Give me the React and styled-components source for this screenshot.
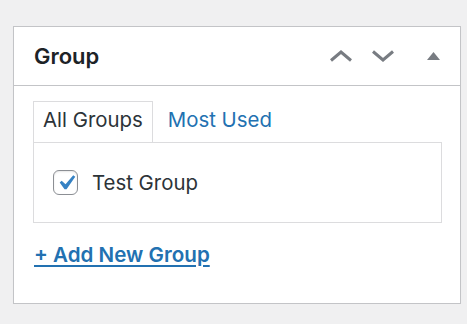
import styled, { createGlobalStyle } from "styled-components";

const Global = createGlobalStyle`
  body {
    margin: 0;
    background: #f0f0f1;
    font-family: Inter, "Liberation Sans", Arial, sans-serif;
  }
`;

const Page = styled.div`
  padding: 26px 0 0 13px;
`;

const Box = styled.div`
  width: 446px;
  height: 276px;
  background: #fff;
  border: 1px solid #c3c4c7;
  box-shadow: 0 1px 1px rgba(0, 0, 0, 0.04);
  display: flex;
  flex-direction: column;
`;

const Header = styled.div`
  height: 58px;
  border-bottom: 1px solid #c3c4c7;
  display: flex;
  align-items: center;
  padding-left: 20px;
`;

const Title = styled.h2`
  margin: 0;
  flex: 1;
  font-size: 22px;
  font-weight: 600;
  color: #1d2327;
`;

const HandleButton = styled.button`
  width: ${(p) => p.$w}px;
  margin-left: ${(p) => p.$ml || 0}px;
  height: 54px;
  padding: 0;
  border: 0;
  background: none;
  display: flex;
  align-items: center;
  justify-content: center;
  color: #787c82;
`;

const Inside = styled.div`
  padding: 15px 18px 0 19px;
`;

const Tabs = styled.ul`
  display: flex;
  margin: 0;
  padding: 0;
  list-style: none;
`;

const Tab = styled.li`
  padding: 6px 9px 10px 9px;
  font-size: 20.4px;
  line-height: 24px;
  border: 1px solid ${(p) => (p.$active ? "#dcdcde" : "transparent")};
  border-bottom: 0;
  color: ${(p) => (p.$active ? "#2c3338" : "#2271b1")};
  margin-right: ${(p) => (p.$active ? 5 : 0)}px;
  background: ${(p) => (p.$active ? "#fff" : "transparent")};
`;

const Panel = styled.div`
  height: 79px;
  border: 1px solid #dcdcde;
  display: flex;
  align-items: center;
  padding-left: 19px;
`;

const Label = styled.label`
  display: flex;
  align-items: center;
  gap: 14px;
  font-size: 20.4px;
  color: #2c3338;
`;

const Check = styled.span`
  width: 23px;
  height: 23px;
  border: 1px solid #8c8f94;
  border-radius: 6px;
  display: flex;
  align-items: center;
  justify-content: center;
  box-shadow: inset 0 1px 2px rgba(0, 0, 0, 0.1);
`;

const AddLink = styled.a`
  display: inline-block;
  margin: 19px 0 0 1px;
  font-size: 20.6px;
  font-weight: 600;
  color: #2271b1;
  text-decoration: underline;
  text-decoration-thickness: 2px;
  text-underline-offset: 3px;
`;

const Chevron = ({ up }) => (
  <svg width="24" height="12" viewBox="0 0 24 12">
    <polyline
      points={up ? "2,10.5 12,2 22,10.5" : "2,1.5 12,10 22,1.5"}
      fill="none"
      stroke="currentColor"
      strokeWidth="3"
    />
  </svg>
);

const Triangle = () => (
  <svg width="13" height="8" viewBox="0 0 13 8">
    <polygon points="6.5,0 13,8 0,8" fill="currentColor" />
  </svg>
);

export default function App() {
  return (
    <Page>
      <Global />
      <Box>
        <Header>
          <Title>Group</Title>
          <HandleButton $w={42}>
            <Chevron up />
          </HandleButton>
          <HandleButton $w={42}>
            <Chevron />
          </HandleButton>
          <HandleButton $w={54} $ml={2}>
            <Triangle />
          </HandleButton>
        </Header>
        <Inside>
          <Tabs>
            <Tab $active>All Groups</Tab>
            <Tab>Most Used</Tab>
          </Tabs>
          <Panel>
            <Label>
              <Check>
                <svg
                  width="30"
                  height="30"
                  viewBox="0 0 20 20"
                  style={{ flexShrink: 0 }}
                >
                  <path
                    d="M14.83 4.89l1.34.94-5.81 8.38H9.02L5.78 9.67l1.34-1.25 2.57 2.4z"
                    fill="#3582c4"
                  />
                </svg>
              </Check>
              Test Group
            </Label>
          </Panel>
          <AddLink href="#">+ Add New Group</AddLink>
        </Inside>
      </Box>
    </Page>
  );
}
